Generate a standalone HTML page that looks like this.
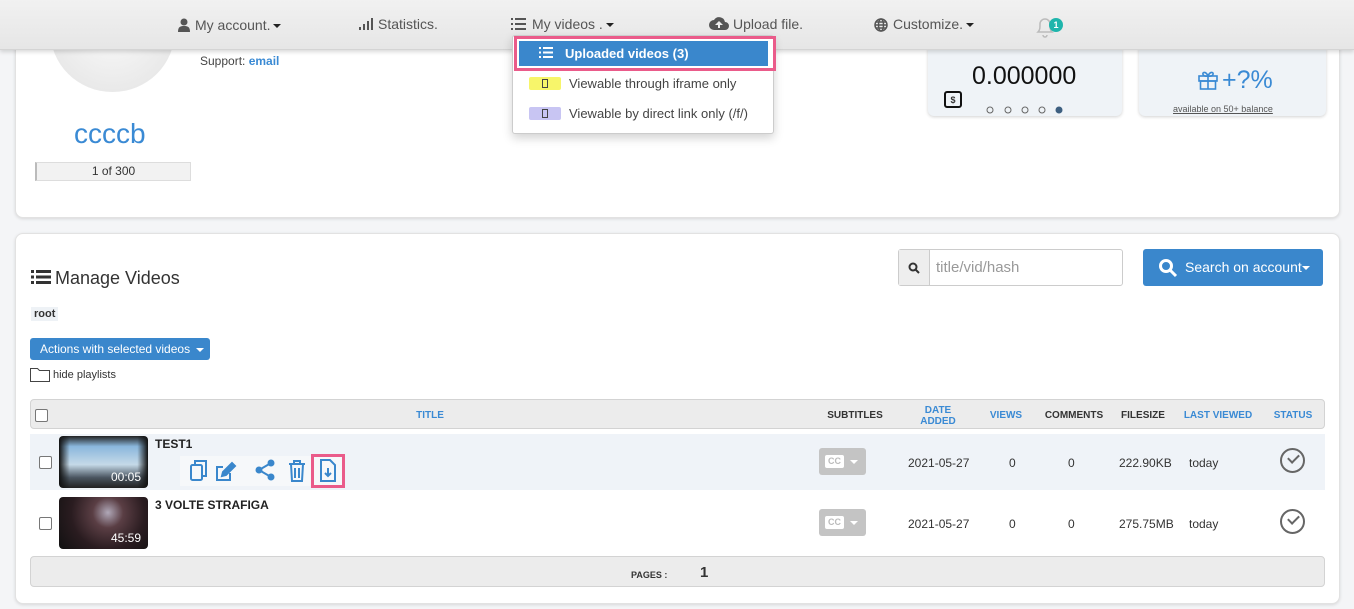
<!DOCTYPE html>
<html><head><meta charset="utf-8"><style>
*{box-sizing:border-box;margin:0;padding:0}
body{width:1354px;height:609px;overflow:hidden;background:#f4f5f7;font-family:"Liberation Sans",sans-serif;position:relative;color:#333}
.a{position:absolute}
.card{position:absolute;background:#fff;border:1px solid #e2e2e2;border-radius:8px;box-shadow:0 1px 3px rgba(0,0,0,.12)}
.nav{position:absolute;left:0;top:0;width:1354px;height:50px;background:linear-gradient(#f1f1f1,#e6e6e6);border-bottom:1px solid #d4d4d4;box-shadow:0 2px 4px rgba(0,0,0,.15);font-size:14px;color:#555}
.nav span{position:absolute;top:17px}
.car{display:inline-block;border-left:4px solid transparent;border-right:4px solid transparent;border-top:4px solid #222;vertical-align:middle;margin-left:3px}
.th{position:absolute;top:410px;font-size:10px;font-weight:bold;text-align:center;line-height:11px}
.blue{color:#3a8ad4}
.cell{position:absolute;font-size:12px;color:#333}
.cb{position:absolute;width:13px;height:13px;border:1px solid #777;border-radius:2px;background:#fff}
.cc{position:absolute;width:47px;height:27px;background:#c4c4c4;border-radius:3px}
.cc i{position:absolute;left:6px;top:7px;width:19px;height:13px;background:#fff;border-radius:2px;font-style:normal;font-size:9px;color:#bbb;text-align:center;line-height:13px;font-weight:bold}
.cc b{position:absolute;left:31px;top:12px;border-left:4px solid transparent;border-right:4px solid transparent;border-top:4px solid #fff}
.chk{position:absolute;width:25px;height:25px;border:2px solid #666;border-radius:50%}
.chk:after{content:"";position:absolute;left:6px;top:4px;width:9px;height:5px;border-left:2px solid #666;border-bottom:2px solid #666;transform:rotate(-45deg)}
svg{position:absolute}
</style></head><body>

<div class="card" style="left:15px;top:20px;width:1325px;height:198px"></div>
<div class="a" style="left:50px;top:20px;width:125px;height:72px;border-radius:0 0 62px 62px;background:radial-gradient(circle at 50% 10%,#fafafa,#e2e2e2)"></div>
<div class="a" style="left:200px;top:54px;font-size:12px;color:#444">Support: <b class="blue">email</b></div>
<div class="a" style="left:74px;top:118px;font-size:28px;color:#3a8ad4">ccccb</div>
<div class="a" style="left:35px;top:162px;width:156px;height:19px;background:#f2f2f2;border:1px solid #ddd;border-left:2px solid #bbb;font-size:12px;text-align:center;line-height:17px;color:#333">1 of 300</div>

<div class="a" style="left:928px;top:45px;width:194px;height:71px;background:#eff3f7;border-radius:6px;box-shadow:0 1px 3px rgba(0,0,0,.18)"></div>
<div class="a" style="left:972px;top:62px;font-size:25px;color:#111">0.000000</div>
<div class="a" style="left:944px;top:91px;width:18px;height:17px;border:2px solid #111;border-radius:3px;font-size:9px;font-weight:bold;text-align:center;line-height:14px">$</div>
<svg style="left:984px;top:105px" width="80" height="10"><g fill="none" stroke="#666"><circle cx="6" cy="5" r="3"/><circle cx="24" cy="5" r="3"/><circle cx="41" cy="5" r="3"/><circle cx="58" cy="5" r="3"/></g><circle cx="75" cy="5" r="3.5" fill="#3d5f80"/></svg>
<div class="a" style="left:1139px;top:45px;width:187px;height:71px;background:#eff3f7;border-radius:6px;box-shadow:0 1px 3px rgba(0,0,0,.18)"></div>
<svg style="left:1198px;top:70px" width="20" height="20" fill="none" stroke="#3a8ad4" stroke-width="1.6"><rect x="1" y="6" width="18" height="5"/><rect x="2.5" y="11" width="15" height="8"/><path d="M10 6v13M10 6C8 1 4 2 5 4.5S10 6 10 6M10 6c2-5 6-4 5-1.5S10 6 10 6"/></svg>
<div class="a" style="left:1222px;top:66px;font-size:25px;color:#3a8ad4">+?%</div>
<div class="a" style="left:1173px;top:104px;font-size:9px;color:#555;text-decoration:underline">available on 50+ balance</div>

<div class="card" style="left:15px;top:233px;width:1325px;height:371px"></div>
<svg style="left:31px;top:269px" width="20" height="16" fill="#333"><rect x="0" y="1" width="3" height="3"/><rect x="0" y="6.5" width="3" height="3"/><rect x="0" y="12" width="3" height="3"/><rect x="5" y="1" width="15" height="3"/><rect x="5" y="6.5" width="15" height="3"/><rect x="5" y="12" width="15" height="3"/></svg>
<div class="a" style="left:55px;top:268px;font-size:18px;color:#333">Manage Videos</div>
<div class="a" style="left:31px;top:307px;font-size:11px;font-weight:bold;background:#eef2f6;padding:1px 3px">root</div>
<div class="a" style="left:30px;top:338px;width:180px;height:22px;background:#3a87cc;border-radius:3px;color:#fff;font-size:12px;line-height:22px;padding-left:10px">Actions with selected videos <span class="car" style="border-top-color:#fff"></span></div>
<svg style="left:30px;top:366px" width="21" height="16" fill="none" stroke="#444"><path d="M.5 2.5h7l2 2h10v11H.5z"/></svg>
<div class="a" style="left:53px;top:369px;font-size:11px;color:#333">hide playlists</div>

<div class="a" style="left:898px;top:249px;width:225px;height:37px;border:1px solid #ccc;border-radius:3px;background:#fff"></div>
<div class="a" style="left:899px;top:250px;width:31px;height:35px;background:#eee;border-right:1px solid #ccc"></div>
<svg style="left:908px;top:262px" width="12" height="12" fill="none" stroke="#333" stroke-width="2"><circle cx="5" cy="5" r="3.5"/><path d="M7.5 7.5l3.5 3.5"/></svg>
<div class="a" style="left:936px;top:259px;font-size:15px;color:#999">title/vid/hash</div>
<div class="a" style="left:1143px;top:249px;width:180px;height:37px;background:#3a87cc;border-radius:3px;color:#fff;font-size:14px;line-height:37px;padding-left:42px">Search on account<span class="car" style="border-top-color:#fff;margin-left:0"></span></div>
<svg style="left:1158px;top:258px" width="20" height="20" fill="none" stroke="#fff" stroke-width="3"><circle cx="8" cy="8" r="5.5"/><path d="M12 12l6 6"/></svg>

<div class="a" style="left:30px;top:399px;width:1295px;height:30px;background:#ececec;border:1px solid #d3d3d3;border-radius:4px"></div>
<div class="cb" style="left:35px;top:409px"></div>
<div class="th blue" style="left:400px;top:410px;width:60px">TITLE</div>
<div class="th" style="left:820px;width:70px">SUBTITLES</div>
<div class="th blue" style="left:908px;top:405px;width:60px">DATE<br>ADDED</div>
<div class="th blue" style="left:986px;width:40px">VIEWS</div>
<div class="th" style="left:1040px;width:68px">COMMENTS</div>
<div class="th" style="left:1116px;width:54px">FILESIZE</div>
<div class="th blue" style="left:1180px;width:76px">LAST VIEWED</div>
<div class="th blue" style="left:1270px;width:46px">STATUS</div>

<div class="a" style="left:30px;top:434px;width:1295px;height:56px;background:#eff3f8"></div>
<div class="cb" style="left:39px;top:456px"></div>
<div class="a" style="left:59px;top:436px;width:89px;height:52px;border-radius:4px;background:linear-gradient(90deg,#111 0,transparent 12%,transparent 88%,#111 100%),linear-gradient(180deg,#222 0,#8ab7dc 20%,#c5d9e8 55%,#4a5560 80%,#222 100%)"></div>
<div class="a" style="left:111px;top:470px;font-size:12px;color:#fff">00:05</div>
<div class="a" style="left:155px;top:437px;font-size:12px;font-weight:bold;color:#222">TEST1</div>
<div class="a" style="left:180px;top:456px;width:165px;height:30px;background:#f6f8fa"></div>
<svg style="left:189px;top:459px" width="150" height="24" fill="none" stroke="#3a87cc" stroke-width="2">
<rect x="2" y="6" width="11" height="15" rx="1.5"/><path d="M6 6V2h11v15h-4"/>
<path d="M34 8h-6v13h13v-7"/><path d="M33 17l1-4 9-9 3 3-9 9z" fill="#3a87cc"/>
<circle cx="82" cy="4" r="3.5" fill="#3a87cc" stroke="none"/><circle cx="70" cy="11" r="3.5" fill="#3a87cc" stroke="none"/><circle cx="82" cy="18" r="3.5" fill="#3a87cc" stroke="none"/><path d="M82 4L70 11l12 7"/>
<path d="M100 5h16M105 5V2h6v3M102 5l1 17h10l1-17M106 9v10M110 9v10"/>
</svg>
<div class="a" style="left:311px;top:454px;width:34px;height:34px;border:3px solid #ea5b8a"></div>
<svg style="left:319px;top:459px" width="18" height="24" fill="none" stroke="#3a87cc" stroke-width="2"><path d="M2 1h9l5 5v16H2z"/><path d="M9 9v8M6 14l3 3 3-3"/></svg>

<div class="cb" style="left:39px;top:517px"></div>
<div class="a" style="left:59px;top:497px;width:89px;height:52px;border-radius:4px;background:radial-gradient(circle at 55% 30%,#b0a8b8 0,#5a3e44 25%,#2a1c20 60%,#111 100%)"></div>
<div class="a" style="left:111px;top:531px;font-size:12px;color:#fff">45:59</div>
<div class="a" style="left:155px;top:498px;font-size:12px;font-weight:bold;color:#222">3 VOLTE STRAFIGA</div>

<div class="cc" style="left:819px;top:448px"><i>CC</i><b></b></div>
<div class="cc" style="left:819px;top:509px"><i>CC</i><b></b></div>
<div class="cell" style="left:908px;top:456px">2021-05-27</div><div class="cell" style="left:908px;top:517px">2021-05-27</div>
<div class="cell" style="left:1009px;top:456px">0</div><div class="cell" style="left:1009px;top:517px">0</div>
<div class="cell" style="left:1068px;top:456px">0</div><div class="cell" style="left:1068px;top:517px">0</div>
<div class="cell" style="left:1119px;top:456px">222.90KB</div><div class="cell" style="left:1119px;top:517px">275.75MB</div>
<div class="cell" style="left:1189px;top:456px">today</div><div class="cell" style="left:1189px;top:517px">today</div>
<div class="chk" style="left:1280px;top:448px"></div><div class="chk" style="left:1280px;top:509px"></div>

<div class="a" style="left:30px;top:556px;width:1295px;height:31px;background:#ececec;border:1px solid #d3d3d3;border-radius:4px"></div>
<div class="a" style="left:631px;top:570px;font-size:9px;font-weight:bold">PAGES :</div>
<div class="a" style="left:700px;top:564px;font-size:15px;font-weight:bold">1</div>

<div class="nav">
<svg style="left:178px;top:18px" width="12" height="14" fill="#555"><circle cx="6" cy="4" r="3.5"/><path d="M0 14c0-5 2-6 6-6s6 1 6 6z"/></svg>
<span style="left:195px">My account.<i class="car"></i></span>
<svg style="left:359px;top:18px" width="14" height="12" fill="#555"><rect x="0" y="9" width="2" height="3"/><rect x="4" y="6" width="2" height="6"/><rect x="8" y="3" width="2" height="9"/><rect x="12" y="0" width="2" height="12"/></svg>
<span style="left:378px;top:16px">Statistics.</span>
<svg style="left:511px;top:18px" width="15" height="12" fill="#555"><rect x="0" y="0" width="2" height="2"/><rect x="0" y="5" width="2" height="2"/><rect x="0" y="10" width="2" height="2"/><rect x="4" y="0" width="11" height="2"/><rect x="4" y="5" width="11" height="2"/><rect x="4" y="10" width="11" height="2"/></svg>
<span style="left:532px;top:16px">My videos .<i class="car"></i></span>
<svg style="left:709px;top:16px" width="20" height="14" fill="#555"><path d="M5 14a5 5 0 0 1 0-10 6 6 0 0 1 11 2 4 4 0 0 1 0 8z"/><path d="M10 5l-4 4h3v3h2V9h3z" fill="#eee"/></svg>
<span style="left:733px;top:16px">Upload file.</span>
<svg style="left:874px;top:18px" width="14" height="14" fill="none" stroke="#555" stroke-width="1.5"><circle cx="7" cy="7" r="6"/><ellipse cx="7" cy="7" rx="2.5" ry="6"/><path d="M1 7h12M2 4h10M2 10h10"/></svg>
<span style="left:893px;top:16px">Customize.<i class="car"></i></span>
<svg style="left:1035px;top:16px" width="20" height="22" fill="none" stroke="#bbb" stroke-width="1.5"><path d="M3 16c2-2 2-4 2-8a5 5 0 0 1 10 0c0 4 0 6 2 8z"/><path d="M8 19a2 2 0 0 0 4 0"/></svg>
<span style="left:1049px;top:18px;width:14px;height:14px;border-radius:50%;background:#1fb5ac;color:#fff;font-size:9px;text-align:center;line-height:14px;font-weight:bold">1</span>
</div>

<div class="a" style="left:512px;top:35px;width:262px;height:99px;background:#fff;border:1px solid #ccc;border-radius:3px;box-shadow:0 4px 10px rgba(0,0,0,.18)"></div>
<div class="a" style="left:514px;top:36px;width:262px;height:35px;border:3px solid #ea5b8a;background:#fff"></div>
<div class="a" style="left:519px;top:41px;width:249px;height:25px;background:#3a87cc;color:#fff;font-size:13px;font-weight:bold;line-height:25px;padding-left:46px">Uploaded videos (3)</div>
<svg style="left:539px;top:47px" width="14" height="11" fill="#fff"><rect x="0" y="0" width="2" height="2"/><rect x="0" y="4.5" width="2" height="2"/><rect x="0" y="9" width="2" height="2"/><rect x="4" y="0" width="10" height="2"/><rect x="4" y="4.5" width="10" height="2"/><rect x="4" y="9" width="10" height="2"/></svg>
<div class="a" style="left:529px;top:77px;width:32px;height:13px;background:#f7f56a;border-radius:2px"></div>
<div class="a" style="left:542px;top:79px;width:6px;height:9px;border:1px solid #444"></div>
<div class="a" style="left:569px;top:76px;font-size:13px;color:#444">Viewable through iframe only</div>
<div class="a" style="left:529px;top:107px;width:32px;height:13px;background:#c8c5f3;border-radius:2px"></div>
<div class="a" style="left:542px;top:109px;width:6px;height:9px;border:1px solid #444"></div>
<div class="a" style="left:569px;top:106px;font-size:13px;color:#444">Viewable by direct link only (/f/)</div>
</body></html>
